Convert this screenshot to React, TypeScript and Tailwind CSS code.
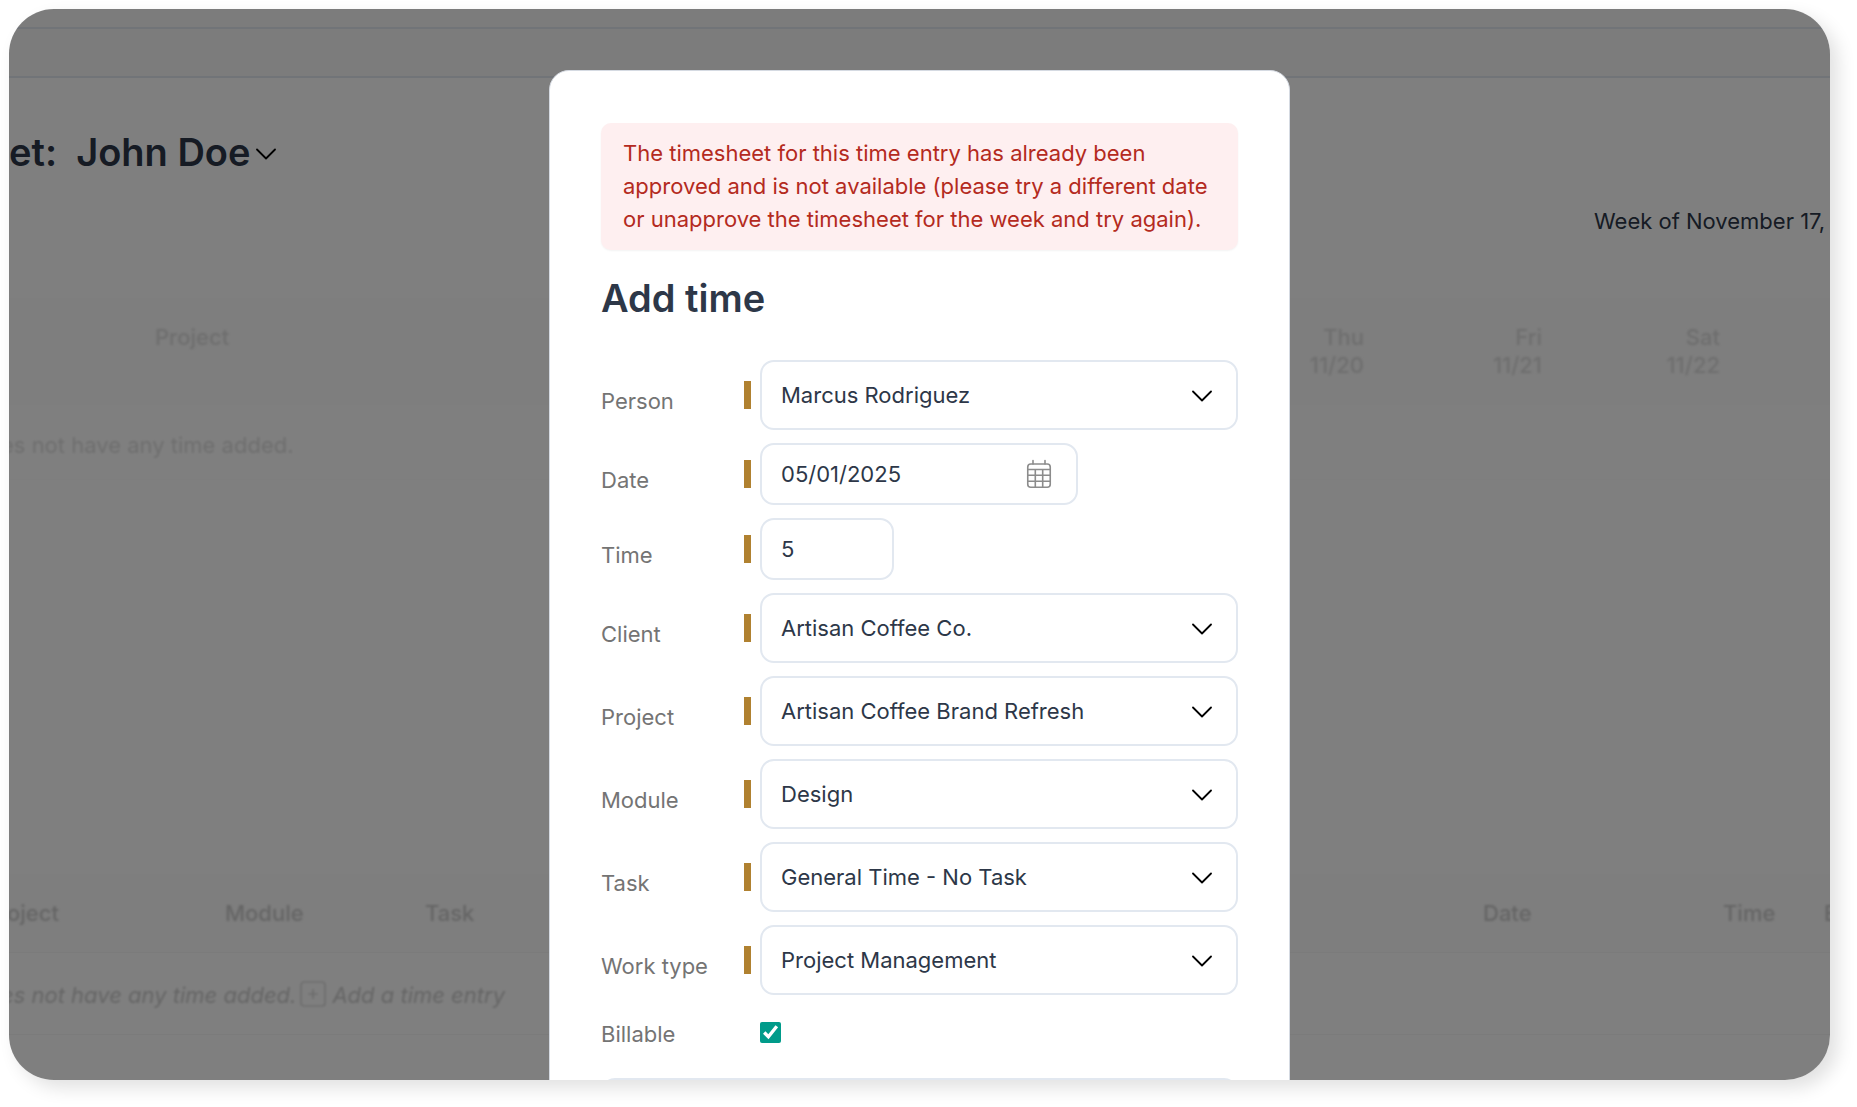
import type { ReactNode } from "react";

const days = [
  { day: "Thu", date: "11/20" },
  { day: "Fri", date: "11/21" },
  { day: "Sat", date: "11/22" },
];

const workFields = [
  { id: "client", label: "Client", value: "Artisan Coffee Co." },
  { id: "project", label: "Project", value: "Artisan Coffee Brand Refresh" },
  { id: "module", label: "Module", value: "Design" },
  { id: "task", label: "Task", value: "General Time - No Task" },
  { id: "workType", label: "Work type", value: "Project Management" },
];

const inputStyles =
  "rounded-[14px] border-2 border-[#e2e8f0] bg-white px-[19px]";

function ChevronIcon({ className }: { className: string }) {
  return (
    <svg
      viewBox="0 0 20 12"
      fill="none"
      stroke="currentColor"
      strokeWidth="1.8"
      strokeLinecap="round"
      strokeLinejoin="round"
      className={className}
      aria-hidden="true"
    >
      <path d="M1 1.5 10 10.5 19 1.5" />
    </svg>
  );
}

function CalendarIcon() {
  return (
    <svg
      viewBox="0 0 26 30"
      fill="none"
      stroke="currentColor"
      strokeWidth="1.6"
      strokeLinecap="round"
      className="h-[30px] w-[26px]"
      aria-hidden="true"
    >
      <rect x="1.75" y="5" width="22.5" height="23.25" rx="3" />
      <path d="M7 1.5V5M19 1.5V5M2 10.5h22M2 16.3h22M2 22.2h22M9.3 10.5v17.5M16.7 10.5v17.5" />
    </svg>
  );
}

function PlusBoxIcon() {
  return (
    <svg
      viewBox="0 0 26 26"
      fill="none"
      stroke="currentColor"
      strokeWidth="1.2"
      className="h-[26px] w-[26px]"
      aria-hidden="true"
    >
      <rect x="1" y="1" width="24" height="24" rx="3" />
      <path d="M13 8v10M8 13h10" />
    </svg>
  );
}

function Field({
  id,
  label,
  children,
}: {
  id: string;
  label: string;
  children: ReactNode;
}) {
  return (
    <div className="flex items-center">
      <label htmlFor={id} className="w-[143px] pt-3 text-[#747474]">
        {label}
      </label>
      <span className="mr-[9px] h-7 w-[7px] bg-[#b08130]" />
      {children}
    </div>
  );
}

function SelectField({
  id,
  label,
  value,
}: {
  id: string;
  label: string;
  value: string;
}) {
  return (
    <Field id={id} label={label}>
      <div className="relative flex-1">
        <select
          id={id}
          className={`${inputStyles} h-[70px] w-full appearance-none`}
        >
          <option>{value}</option>
        </select>
        <ChevronIcon className="pointer-events-none absolute top-[30px] right-[26px] h-3 w-5 text-black" />
      </div>
    </Field>
  );
}

function TimesheetPage() {
  return (
    <div className="flex flex-col bg-white leading-7">
      <div className="h-5 border-b-2 border-[#e2e8f0] bg-[#f9f9f9]" />
      <div className="h-[49px] border-b-2 border-[#e2e8f0] bg-[#f9f9f9]" />

      <div className="mt-[51px] flex items-center gap-[6px]">
        <h1 className="text-[38px] leading-[46px] font-semibold whitespace-pre">
          et:{"  "}John Doe
        </h1>
        <ChevronIcon className="mt-1 h-3 w-5 text-black" />
      </div>
      <p className="mt-8 w-[236px] self-end whitespace-nowrap">
        Week of November 17, 2
      </p>

      <table className="mt-[63px] w-full table-fixed text-[#dcdcdc]">
        <thead>
          <tr className="bg-[#fcfcfc]">
            <th className="pt-[25px] pb-[26px] pl-[146px] text-left align-top font-medium">
              <span className="blur-[1px]">Project</span>
            </th>
            {days.map(({ day, date }) => (
              <th
                key={day}
                className="w-[178px] pt-[25px] pb-[26px] text-right font-medium blur-[1px]"
              >
                {day}
                <br />
                {date}
              </th>
            ))}
            <td className="w-[110px]" />
          </tr>
        </thead>
        <tbody>
          <tr className="border-b border-[#fcfcfc]">
            <td colSpan={5} className="pt-[26px] pb-[20px]">
              <div className="-ml-2 blur-[1px]">
                es not have any time added.
              </div>
            </td>
          </tr>
        </tbody>
      </table>

      <table className="mt-[394px] w-full table-fixed text-left text-[#cacaca]">
        <thead>
          <tr className="border-b border-[#f7f7f7] bg-[#fcfcfc]">
            <th className="w-[216px] py-[25px] font-medium">
              <div className="-ml-[2px] blur-[1px]">oject</div>
            </th>
            <th className="w-[200px] font-medium blur-[1px]">Module</th>
            <th className="font-medium blur-[1px]">Task</th>
            <th className="w-[240px] font-medium blur-[1px]">Date</th>
            <th className="w-[101px] font-medium blur-[1px]">Time</th>
            <th className="w-[6px] font-medium blur-[1px]">B</th>
          </tr>
        </thead>
        <tbody>
          <tr className="border-b border-[#f7f7f7]">
            <td colSpan={6} className="pt-[28px] pb-[25px]">
              <div className="-ml-2 flex items-center gap-1 italic blur-[1px]">
                es not have any time added.
                <button type="button" className="flex gap-[6px] italic">
                  <PlusBoxIcon />
                  Add a time entry
                </button>
              </div>
            </td>
          </tr>
        </tbody>
      </table>
    </div>
  );
}

function AddTimeDialog() {
  return (
    <div
      role="dialog"
      aria-labelledby="dialog-title"
      className="mx-auto mt-[61px] w-[741px] rounded-[20px] border border-[#d5dae2] bg-white px-[51px] pt-[52px] pb-12"
    >
      <div
        role="alert"
        className="rounded-[10px] bg-[#feeff0] px-[22px] py-[14px] leading-[33px] text-[#b42a20] shadow-xs"
      >
        The timesheet for this time entry has already been approved and is not
        available (please try a different date or unapprove the timesheet for
        the week and try again).
      </div>
      <h2
        id="dialog-title"
        className="mt-[26px] text-[38px] leading-[44px] font-semibold"
      >
        Add time
      </h2>

      <form className="mt-10 flex flex-col gap-[13px]">
        <SelectField id="person" label="Person" value="Marcus Rodriguez" />
        <Field id="date" label="Date">
          <div className="relative w-[318px]">
            <input
              id="date"
              type="text"
              defaultValue="05/01/2025"
              className={`${inputStyles} h-[62px] w-full`}
            />
            <button
              type="button"
              aria-label="Open calendar"
              className="absolute top-4 right-[26px] text-[#8c8c8c]"
            >
              <CalendarIcon />
            </button>
          </div>
        </Field>
        <Field id="time" label="Time">
          <input
            id="time"
            type="text"
            defaultValue="5"
            className={`${inputStyles} h-[62px] w-[134px]`}
          />
        </Field>
        {workFields.map((field) => (
          <SelectField key={field.id} {...field} />
        ))}
        <div className="flex h-12 items-center">
          <label htmlFor="billable" className="w-[159px] pt-1 text-[#747474]">
            Billable
          </label>
          <input
            id="billable"
            type="checkbox"
            defaultChecked
            className="h-[21px] w-[21px] accent-[#009b8a]"
          />
        </div>
        <textarea
          aria-label="Notes"
          className={`${inputStyles} mt-[9px] h-40 resize-none py-3`}
        />
      </form>
    </div>
  );
}

export default function App() {
  return (
    <div className="h-screen bg-white pt-[9px] pr-[27px] pb-[27px] pl-[9px] font-['Inter',sans-serif] text-[22px] text-[#2d3748]">
      <div className="relative h-full overflow-hidden rounded-[45px] bg-white shadow-[8px_8px_18px_rgba(0,0,0,0.12)]">
        <TimesheetPage />
        <div className="absolute inset-0 overflow-hidden bg-black/50">
          <AddTimeDialog />
        </div>
      </div>
    </div>
  );
}
